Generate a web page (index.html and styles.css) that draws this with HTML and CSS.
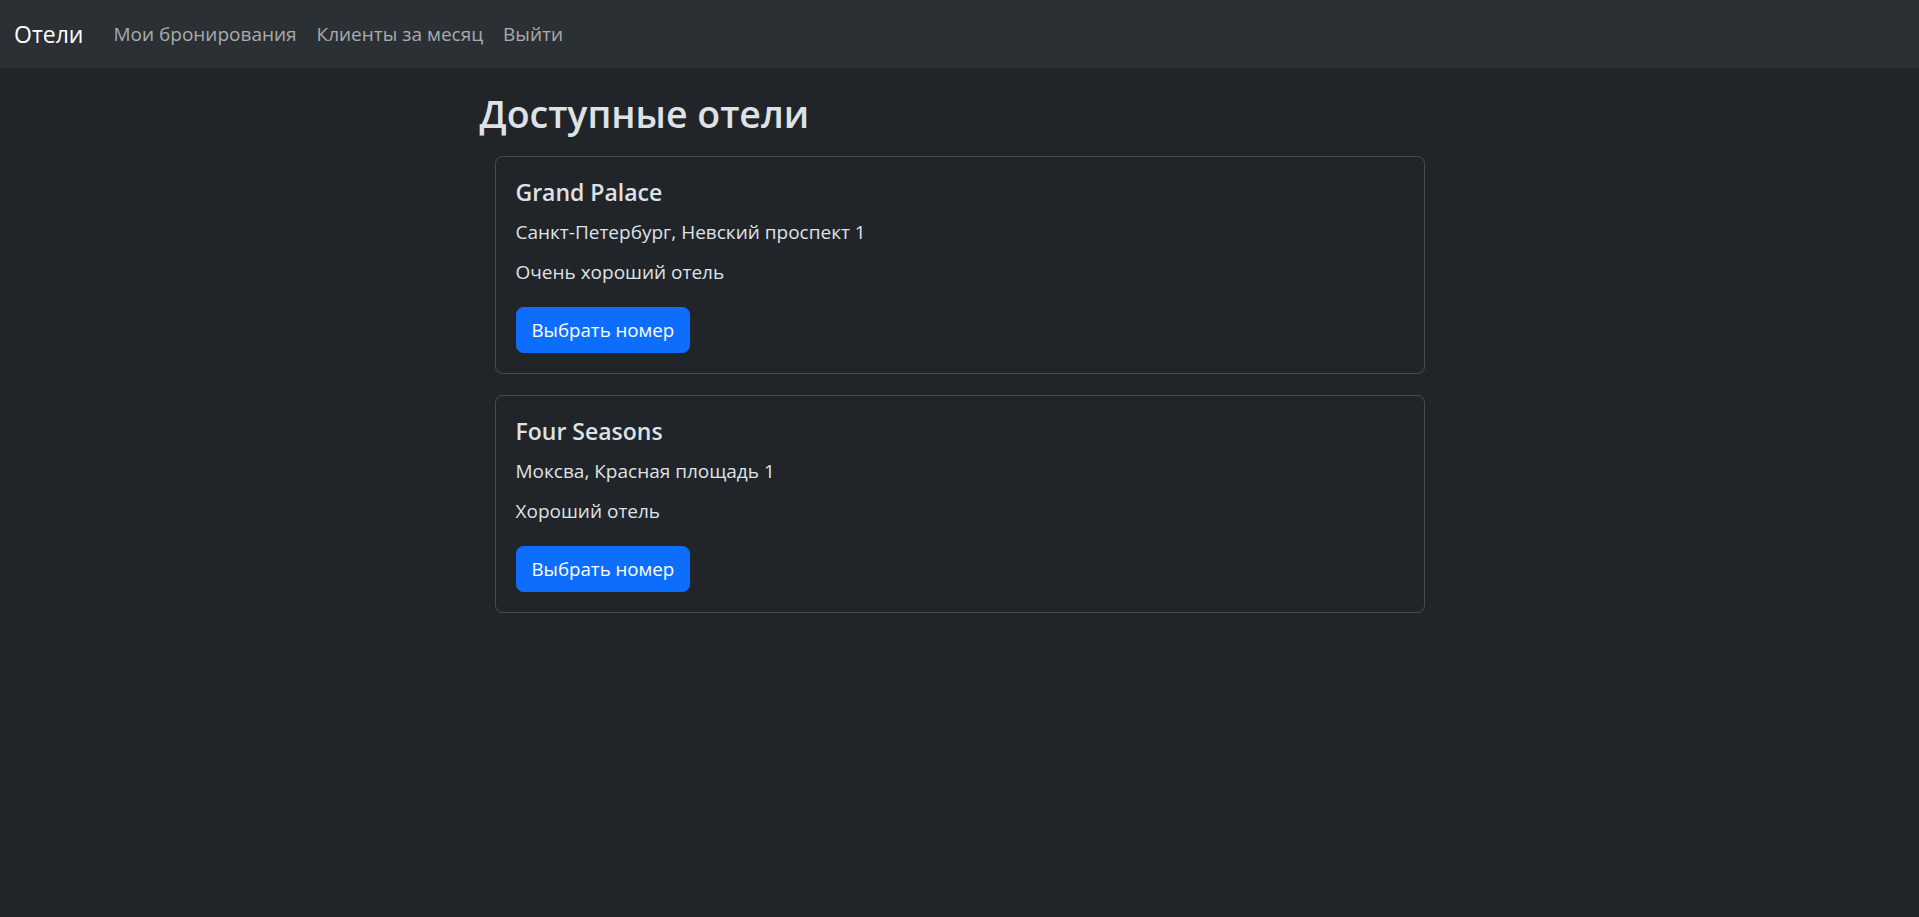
FILE: index.html
```html
<!DOCTYPE html>
<html lang="ru">
<head>
<meta charset="utf-8">
<title>Отели</title>
<link rel="stylesheet" href="styles.css">
</head>
<body>
<nav class="navbar">
  <a class="brand" href="#">Отели</a>
  <ul class="nav">
    <li><a class="nav-link" href="#">Мои бронирования</a></li>
    <li><a class="nav-link" href="#">Клиенты за месяц</a></li>
    <li><a class="nav-link" href="#">Выйти</a></li>
  </ul>
</nav>
<main class="container">
  <h2 class="page-title">Доступные отели</h2>
  <div class="cards">
    <div class="card">
      <h5 class="card-title">Grand Palace</h5>
      <p class="card-text address">Санкт-Петербург, Невский проспект 1</p>
      <p class="card-text">Очень хороший отель</p>
      <a class="btn" href="#">Выбрать номер</a>
    </div>
    <div class="card">
      <h5 class="card-title">Four Seasons</h5>
      <p class="card-text address">Моксва, Красная площадь 1</p>
      <p class="card-text">Хороший отель</p>
      <a class="btn" href="#">Выбрать номер</a>
    </div>
  </div>
</main>
</body>
</html>
```
FILE: styles.css
```css
* { box-sizing: border-box; }
html, body { margin: 0; padding: 0; }
body {
  background: #212529;
  color: #dee2e6;
  font-family: "Open Sans", "Noto Sans", sans-serif;
  font-size: 19px;
  line-height: 30px;
  min-height: 917px;
}
a { text-decoration: none; }
.navbar {
  height: 68px;
  background: #2b3035;
  display: flex;
  align-items: center;
  padding: 0 15px 0 14px;
}
.brand {
  color: #fff;
  font-size: 23px;
  line-height: 30px;
  margin-right: 20px;
}
.nav {
  display: flex;
  list-style: none;
  margin: 0;
  padding: 0;
}
.nav-link {
  display: block;
  padding: 0 10px;
  color: rgba(255, 255, 255, 0.6);
  font-size: 19px;
  line-height: 30px;
}
.container {
  width: 960px;
  margin: 0 auto;
  padding-top: 22px;
}
.page-title {
  margin: 0 0 18px;
  font-size: 37.5px;
  line-height: 48px;
  font-weight: 600;
  color: #dee2e6;
}
.cards {
  padding: 0 15px;
  display: flex;
  flex-direction: column;
  gap: 21px;
}
.card {
  border: 1px solid rgba(255, 255, 255, 0.175);
  border-radius: 7.5px;
  padding: 20px;
  display: flex;
  flex-direction: column;
  align-items: flex-start;
}
.card-title {
  margin: 0 0 10px;
  font-size: 23px;
  line-height: 30px;
  font-weight: 600;
}
.card-text {
  margin: 0 0 20px;
}
.card-text.address {
  margin-bottom: 10px;
}
.btn {
  display: inline-block;
  background: #0d6efd;
  color: #fff;
  border: 1px solid #0d6efd;
  border-radius: 7.5px;
  padding: 7px 15px;
  font-size: 18.7px;
  line-height: 30px;
}
```
